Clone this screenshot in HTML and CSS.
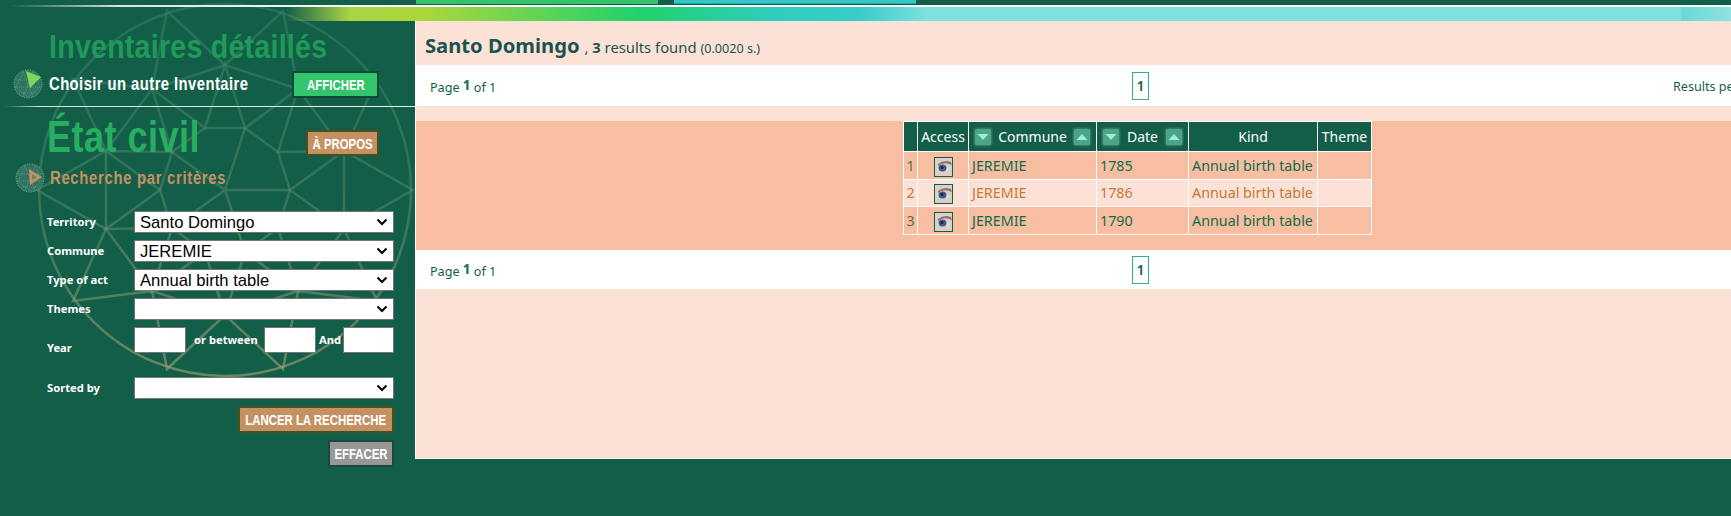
FILE: index.html
```html
<!DOCTYPE html>
<html lang="fr">
<head>
<meta charset="utf-8">
<title>État civil</title>
<link rel="stylesheet" href="styles.css">
</head>
<body>
<div class="page">
  <svg class="globe" width="415" height="400" viewBox="0 0 415 400" aria-hidden="true">
    <defs>
      <linearGradient id="globeStroke" gradientUnits="userSpaceOnUse" x1="0" y1="0" x2="0" y2="376">
        <stop offset="0" stop-color="#3f8a70" stop-opacity=".4"/>
        <stop offset=".5" stop-color="#5c9070" stop-opacity=".45"/>
        <stop offset="1" stop-color="#9a9f70" stop-opacity=".65"/>
      </linearGradient>
    </defs>
    <g fill="none" stroke="url(#globeStroke)" stroke-width="2.500">
      <circle cx="225" cy="190" r="186"/>
      <path d="M290 190 278 228 245 252 205 252 172 228 160 190 172 152 205 128 245 128 278 152Z"/>
      <path d="M344 229 298 291 225 315 152 291 106 229 106 151 152 89 225 65 298 89 344 151Z"/>
      <path d="M290 190 344 229 278 228 298 291 245 252 225 315 205 252 152 291 172 228 106 229 160 190 106 151 172 152 152 89 205 128 225 65 245 128 298 89 278 152 344 151Z"/>
      <path d="M344 229 377 301 298 291 283 369 225 315 167 369 152 291 73 301 106 229 37 190 106 151 73 79 152 89 167 11 225 65 283 11 298 89 377 79 344 151 413 190Z"/>
      <path d="M225 190 290 190M225 190 245 252M225 190 172 228M225 190 172 152M225 190 245 128"/>
    </g>
  </svg>

  <header class="topbar">
    <div class="tabs">
      <div class="tabs-spacer"></div>
      <div class="tab tab-green"></div>
      <div class="tab-gap"></div>
      <div class="tab tab-teal"></div>
    </div>
    <div class="top-line"></div>
    <div class="stripe"></div>
  </header>

  <div class="layout">
    <aside class="sidebar">
      <div class="inv-title"><span class="narrow narrow-84">Inventaires détaillés</span></div>
      <div class="inv-row">
        <svg class="ball" width="30" height="30" viewBox="0 0 30 30" aria-hidden="true">
          <circle cx="15" cy="15" r="14" fill="#2f7460" stroke="#8fb5a8" stroke-width="1" stroke-dasharray="1 1.500"/>
          <path d="M3 11H27M2 18H28M6 24H24M10 3 3 18 15 28 27 18 20 3M10 3 20 28M20 3 10 28" fill="none" stroke="#6fa08e" stroke-width=".7" stroke-dasharray="1 1"/>
          <path d="M13 2 28 8 17 19Z" fill="#76dc5a"/>
        </svg>
        <span class="inv-label"><span class="narrow narrow-78">Choisir un autre Inventaire</span></span>
        <button class="btn btn-green" type="button"><span class="narrow">AFFICHER</span></button>
      </div>
      <div class="rule"></div>
      <div class="civil-row">
        <div class="civil-title"><span class="narrow narrow-80">État civil</span></div>
        <button class="btn btn-tan btn-about" type="button"><span class="narrow">À PROPOS</span></button>
      </div>
      <div class="search-head">
        <svg class="ball" width="30" height="30" viewBox="0 0 30 30" aria-hidden="true">
          <circle cx="15" cy="15" r="14" fill="#2f7460" stroke="#8fb5a8" stroke-width="1" stroke-dasharray="1 1.500"/>
          <path d="M3 11H27M2 18H28M6 24H24M10 3 3 18 15 28 27 18 20 3M10 3 20 28M20 3 10 28" fill="none" stroke="#6fa08e" stroke-width=".7" stroke-dasharray="1 1"/>
          <path d="M14 6 27 14 15 22Z" fill="#c49262"/>
          <path d="M17 11 22 14 17 17Z" fill="#5d8a6e"/>
        </svg>
        <span class="search-label"><span class="narrow narrow-82">Recherche par critères</span></span>
      </div>
      <form class="criteria">
        <label class="field-label">Territory</label>
        <select class="field"><option>Santo Domingo</option></select>
        <label class="field-label">Commune</label>
        <select class="field"><option>JEREMIE</option></select>
        <label class="field-label">Type of act</label>
        <select class="field"><option>Annual birth table</option></select>
        <label class="field-label">Themes</label>
        <select class="field"><option></option></select>
        <label class="field-label year-label">Year</label>
        <div class="year-fields">
          <input class="year-input" type="text">
          <span class="year-text year-between">or between</span>
          <input class="year-input" type="text">
          <span class="year-text year-and">And</span>
          <input class="year-input year-last" type="text">
        </div>
        <label class="field-label sorted-label">Sorted by</label>
        <select class="field sorted-field"><option></option></select>
        <div class="actions">
          <button class="btn btn-tan btn-search" type="button"><span class="narrow">LANCER LA RECHERCHE</span></button>
          <button class="btn btn-grey" type="button"><span class="narrow">EFFACER</span></button>
        </div>
      </form>
    </aside>

    <main class="main">
      <div class="results-head">
        <strong class="place">Santo Domingo</strong>
        <span class="count"> , <b>3</b> results found</span>
        <span class="time">(0.0020 s.)</span>
      </div>
      <div class="pager pager-top">
        <div class="pager-info">Page <b>1</b> of 1</div>
        <div class="pager-num">1</div>
        <div class="pager-size">Results per page</div>
      </div>
      <div class="table-band">
        <table class="results">
          <thead>
            <tr>
              <th class="c-num"></th>
              <th class="c-access">Access</th>
              <th class="c-commune">
                <span class="sort-cell">
                  <svg class="sort" width="20" height="20" viewBox="0 0 20 20" aria-hidden="true"><rect x="1" y="1" width="18" height="18" rx="3" class="sort-bg"/><path d="M4.500 7H15.500L10 13Z" class="sort-arrow"/></svg>
                  Commune
                  <svg class="sort" width="20" height="20" viewBox="0 0 20 20" aria-hidden="true"><rect x="1" y="1" width="18" height="18" rx="3" class="sort-bg"/><path d="M4.500 13H15.500L10 7Z" class="sort-arrow"/></svg>
                </span>
              </th>
              <th class="c-date">
                <span class="sort-cell">
                  <svg class="sort" width="20" height="20" viewBox="0 0 20 20" aria-hidden="true"><rect x="1" y="1" width="18" height="18" rx="3" class="sort-bg"/><path d="M4.500 7H15.500L10 13Z" class="sort-arrow"/></svg>
                  Date
                  <svg class="sort" width="20" height="20" viewBox="0 0 20 20" aria-hidden="true"><rect x="1" y="1" width="18" height="18" rx="3" class="sort-bg"/><path d="M4.500 13H15.500L10 7Z" class="sort-arrow"/></svg>
                </span>
              </th>
              <th class="c-kind">Kind</th>
              <th class="c-theme">Theme</th>
            </tr>
          </thead>
          <tbody>
            <tr class="row-a">
              <td class="n">1</td>
              <td class="eye-cell"><svg class="eye" width="19" height="20" viewBox="0 0 19 20" aria-hidden="true"><rect x=".5" y=".5" width="18" height="19" fill="#d9d0ca" stroke="#135e48"/><path d="M4 7Q10 2 17 5L18 8Q10 4 4 9Z" fill="#8d7468"/><path d="M3 12Q9 8 17 12Q10 17 3 12Z" fill="#e6e0dc"/><ellipse cx="8.500" cy="11" rx="4" ry="3.500" fill="#43598c"/><circle cx="8" cy="10.500" r="1.500" fill="#1b2140"/></svg></td>
              <td>JEREMIE</td><td>1785</td><td>Annual birth table</td><td></td>
            </tr>
            <tr class="row-b">
              <td class="n">2</td>
              <td class="eye-cell"><svg class="eye" width="19" height="20" viewBox="0 0 19 20" aria-hidden="true"><rect x=".5" y=".5" width="18" height="19" fill="#d9d0ca" stroke="#135e48"/><path d="M4 7Q10 2 17 5L18 8Q10 4 4 9Z" fill="#8d7468"/><path d="M3 12Q9 8 17 12Q10 17 3 12Z" fill="#e6e0dc"/><ellipse cx="8.500" cy="11" rx="4" ry="3.500" fill="#43598c"/><circle cx="8" cy="10.500" r="1.500" fill="#1b2140"/></svg></td>
              <td>JEREMIE</td><td>1786</td><td>Annual birth table</td><td></td>
            </tr>
            <tr class="row-a">
              <td class="n">3</td>
              <td class="eye-cell"><svg class="eye" width="19" height="20" viewBox="0 0 19 20" aria-hidden="true"><rect x=".5" y=".5" width="18" height="19" fill="#d9d0ca" stroke="#135e48"/><path d="M4 7Q10 2 17 5L18 8Q10 4 4 9Z" fill="#8d7468"/><path d="M3 12Q9 8 17 12Q10 17 3 12Z" fill="#e6e0dc"/><ellipse cx="8.500" cy="11" rx="4" ry="3.500" fill="#43598c"/><circle cx="8" cy="10.500" r="1.500" fill="#1b2140"/></svg></td>
              <td>JEREMIE</td><td>1790</td><td>Annual birth table</td><td></td>
            </tr>
          </tbody>
        </table>
      </div>
      <div class="pager pager-bottom">
        <div class="pager-info">Page <b>1</b> of 1</div>
        <div class="pager-num">1</div>
        <div class="pager-size"></div>
      </div>
    </main>
  </div>
</div>
</body>
</html>
```
FILE: styles.css
```css
* { box-sizing: border-box; }
html, body { margin: 0; height: 100%; overflow: hidden; }
body { background: #135e48; font-family: "Noto Sans", "DejaVu Sans", sans-serif; color: #135e48; }
.page { position: relative; width: 1731px; height: 516px; overflow: hidden; }
.globe { position: absolute; left: 0; top: 0; }

/* top bands */
.topbar { position: relative; height: 21px; width: 1861px; }
.tabs { display: flex; height: 5px; }
.tabs-spacer { width: 416px; }
.tab { width: 242px; height: 4px; }
.tab-green { background: #33c46a; }
.tab-gap { width: 16px; }
.tab-teal { background: #33c8c8; border-bottom: 1px solid #2aa8a8; }
.top-line { height: 2px; background: linear-gradient(90deg, transparent 10px, #d8e4de 120px, #fff 400px); }
.stripe { height: 14px; width: 1731px; background: linear-gradient(90deg, transparent 285px, #a8d445 350px, #aed63a 420px, #1fd26c 640px, #2fcdbb 770px, #38cccb 860px, #80e2de 930px, #80e2de 1680px, #68d9d8 1682px, #90e2e0 1731px); }

.layout { position: relative; display: flex; align-items: flex-start; }

/* condensed display lettering of the original artwork */
.narrow { display: inline-block; flex: none; white-space: nowrap; transform: scaleX(.76); }
.narrow-84, .narrow-78, .narrow-80, .narrow-82 { transform-origin: left center; }
.narrow-84 { transform: scaleX(.84); }
.narrow-78 { transform: scaleX(.78); }
.narrow-80 { transform: scaleX(.8); }
.narrow-82 { transform: scaleX(.82); }

/* sidebar */
.sidebar { flex: none; width: 415px; height: 495px; }
.inv-title { margin: 8px 0 0 49px; height: 34px; font: bold 34px/34px "Liberation Sans", sans-serif; color: #1f9a58; letter-spacing: .3px; white-space: nowrap; }
.inv-row { display: flex; align-items: center; height: 36px; margin-top: 3px; padding: 0 36px 0 13px; }
.ball { flex: none; }
.inv-label { flex: none; width: 200px; margin-left: 6px; font: bold 19px/20px "Liberation Sans", sans-serif; letter-spacing: .55px; color: #fff; white-space: nowrap; }
.btn { display: flex; flex: none; justify-content: center; align-items: center; border: 2px solid #0e4a38; border-radius: 1px; color: #fff; font: bold 15px/1 "Liberation Sans", sans-serif; padding: 0; overflow: hidden; }
.btn-green { margin-left: auto; width: 87px; height: 27px; background: #33c46e; }
.rule { height: 1px; margin-top: 4px; background: linear-gradient(90deg, transparent 4px, #d8e4de 40px, #e8efe8 415px); }
.civil-row { display: flex; justify-content: space-between; align-items: flex-start; height: 51px; padding: 0 36px 0 47px; }
.civil-title { margin-top: 7px; font: bold 45px/46px "Liberation Sans", sans-serif; color: #27ae60; letter-spacing: .6px; white-space: nowrap; }
.btn-tan { background: #c49262; border-color: #4a4f20; }
.btn-about { margin-top: 23px; width: 73px; height: 26px; }
.search-head { display: flex; align-items: center; height: 30px; margin-top: 5px; padding-left: 15px; }
.search-label { margin-left: 5px; font: bold 18px/20px "Liberation Sans", sans-serif; letter-spacing: .9px; color: #c49262; white-space: nowrap; }

.criteria { display: grid; grid-template-columns: 87px 260px; margin: 18px 0 0 47px; row-gap: 7px; align-items: center; }
.field-label { font: bold 11.2px/22px "Noto Sans", sans-serif; color: #fff; white-space: nowrap; }
.field { appearance: none; width: 260px; height: 22px; padding: 1px 0 0 5px; border: 1px solid #767676; border-radius: 0; color: #000; font: 16.6px/20px "Liberation Sans", sans-serif;
  background: #fff url("data:image/svg+xml,%3Csvg xmlns='http://www.w3.org/2000/svg' width='12' height='8' viewBox='0 0 12 8'%3E%3Cpath d='M1.500 1.500 6 6 10.500 1.500' fill='none' stroke='%23000' stroke-width='2'/%3E%3C/svg%3E") no-repeat right 5px center; }
.year-label { align-self: end; margin-bottom: -6px; }
.year-fields { display: flex; align-items: flex-start; height: 26px; }
.year-input { width: 52px; height: 26px; border: 1px solid #767676; background: #fff; padding: 0; border-radius: 0; }
.year-text { font: bold 11.2px/26px "Noto Sans", sans-serif; color: #fff; white-space: nowrap; }
.year-between { width: 78px; padding-left: 8px; }
.year-and { width: 27px; padding-left: 3px; }
.year-last { width: 51px; }
.sorted-label { margin-top: 17px; }
.sorted-field { margin-top: 17px; }
.actions { grid-column: 2; display: flex; flex-direction: column; align-items: flex-end; gap: 7px; }
.btn-search { width: 156px; height: 27px; }
.btn-grey { width: 66px; height: 27px; background: #979797; border-color: #1c4a3a; }

/* main */
.main { flex: none; width: 1446px; height: 438px; background: #fce2d6; border-left: 1px solid #fff; border-bottom: 1px solid #fff; }
.results-head { display: flex; align-items: baseline; height: 44px; padding: 10px 0 0 9px; color: #1b5250; white-space: pre; }
.place { font-size: 20.2px; line-height: 28px; font-weight: 700; }
.count { font-size: 14.8px; margin-left: 1px; }
.time { font-size: 12.6px; margin-left: 4px; }
.pager { display: grid; grid-template-columns: 1fr 17px 1fr; align-items: center; background: #fff; padding: 0 12px 0 16px; color: #135e48; font-size: 12.6px; }
.pager-top { height: 41px; }
.pager-bottom { height: 39px; }
.pager-info { margin-left: -2px; padding-top: 3px; }
.pager-info b { position: relative; top: -2px; font-size: 13.5px; color: #0f6b60; }
.pager-num { width: 17px; height: 28px; border: 1px solid #3aa98e; color: #135e48; font: 600 14px/26px "Noto Sans", sans-serif; text-align: center; }
.pager-size { justify-self: start; margin-left: 524px; padding-top: 2px; white-space: nowrap; }
.table-band { margin-top: 15px; height: 129px; padding-right: 2px; background: #f8bea2; display: flex; justify-content: center; align-items: flex-start; }
.results { border-collapse: collapse; table-layout: fixed; width: 468px; font-size: 14.3px; }
.results th, .results td { border: 1px solid #fff; padding: 0; white-space: nowrap; overflow: hidden; }
.results th { height: 30px; background: #135e48; color: #fff; font-weight: 400; font-size: 14px; text-align: center; }
.results td { height: 27.500px; padding-left: 3px; }
.c-num { width: 14px; }
.c-access { width: 51px; }
.c-commune { width: 128px; }
.c-date { width: 92px; }
.c-kind { width: 129px; }
.c-theme { width: 54px; }
.sort-cell { display: flex; align-items: center; justify-content: space-between; padding: 0 4px; }
.sort { flex: none; }
.sort-bg { fill: #4aa58a; stroke: #2c6e5a; stroke-width: 1.500; }
.sort-arrow { fill: #a0eed2; }
.row-a td { color: #0f6b4a; }
.row-b td { color: #c47a35; background: #fce2d6; }
.results td.n { padding: 0; text-align: center; color: #5d7034; }
.results .row-b td.n { color: #c47a35; }
.results td.eye-cell { padding: 3px 0 0; text-align: center; line-height: 0; }
.eye { vertical-align: top; }
```
